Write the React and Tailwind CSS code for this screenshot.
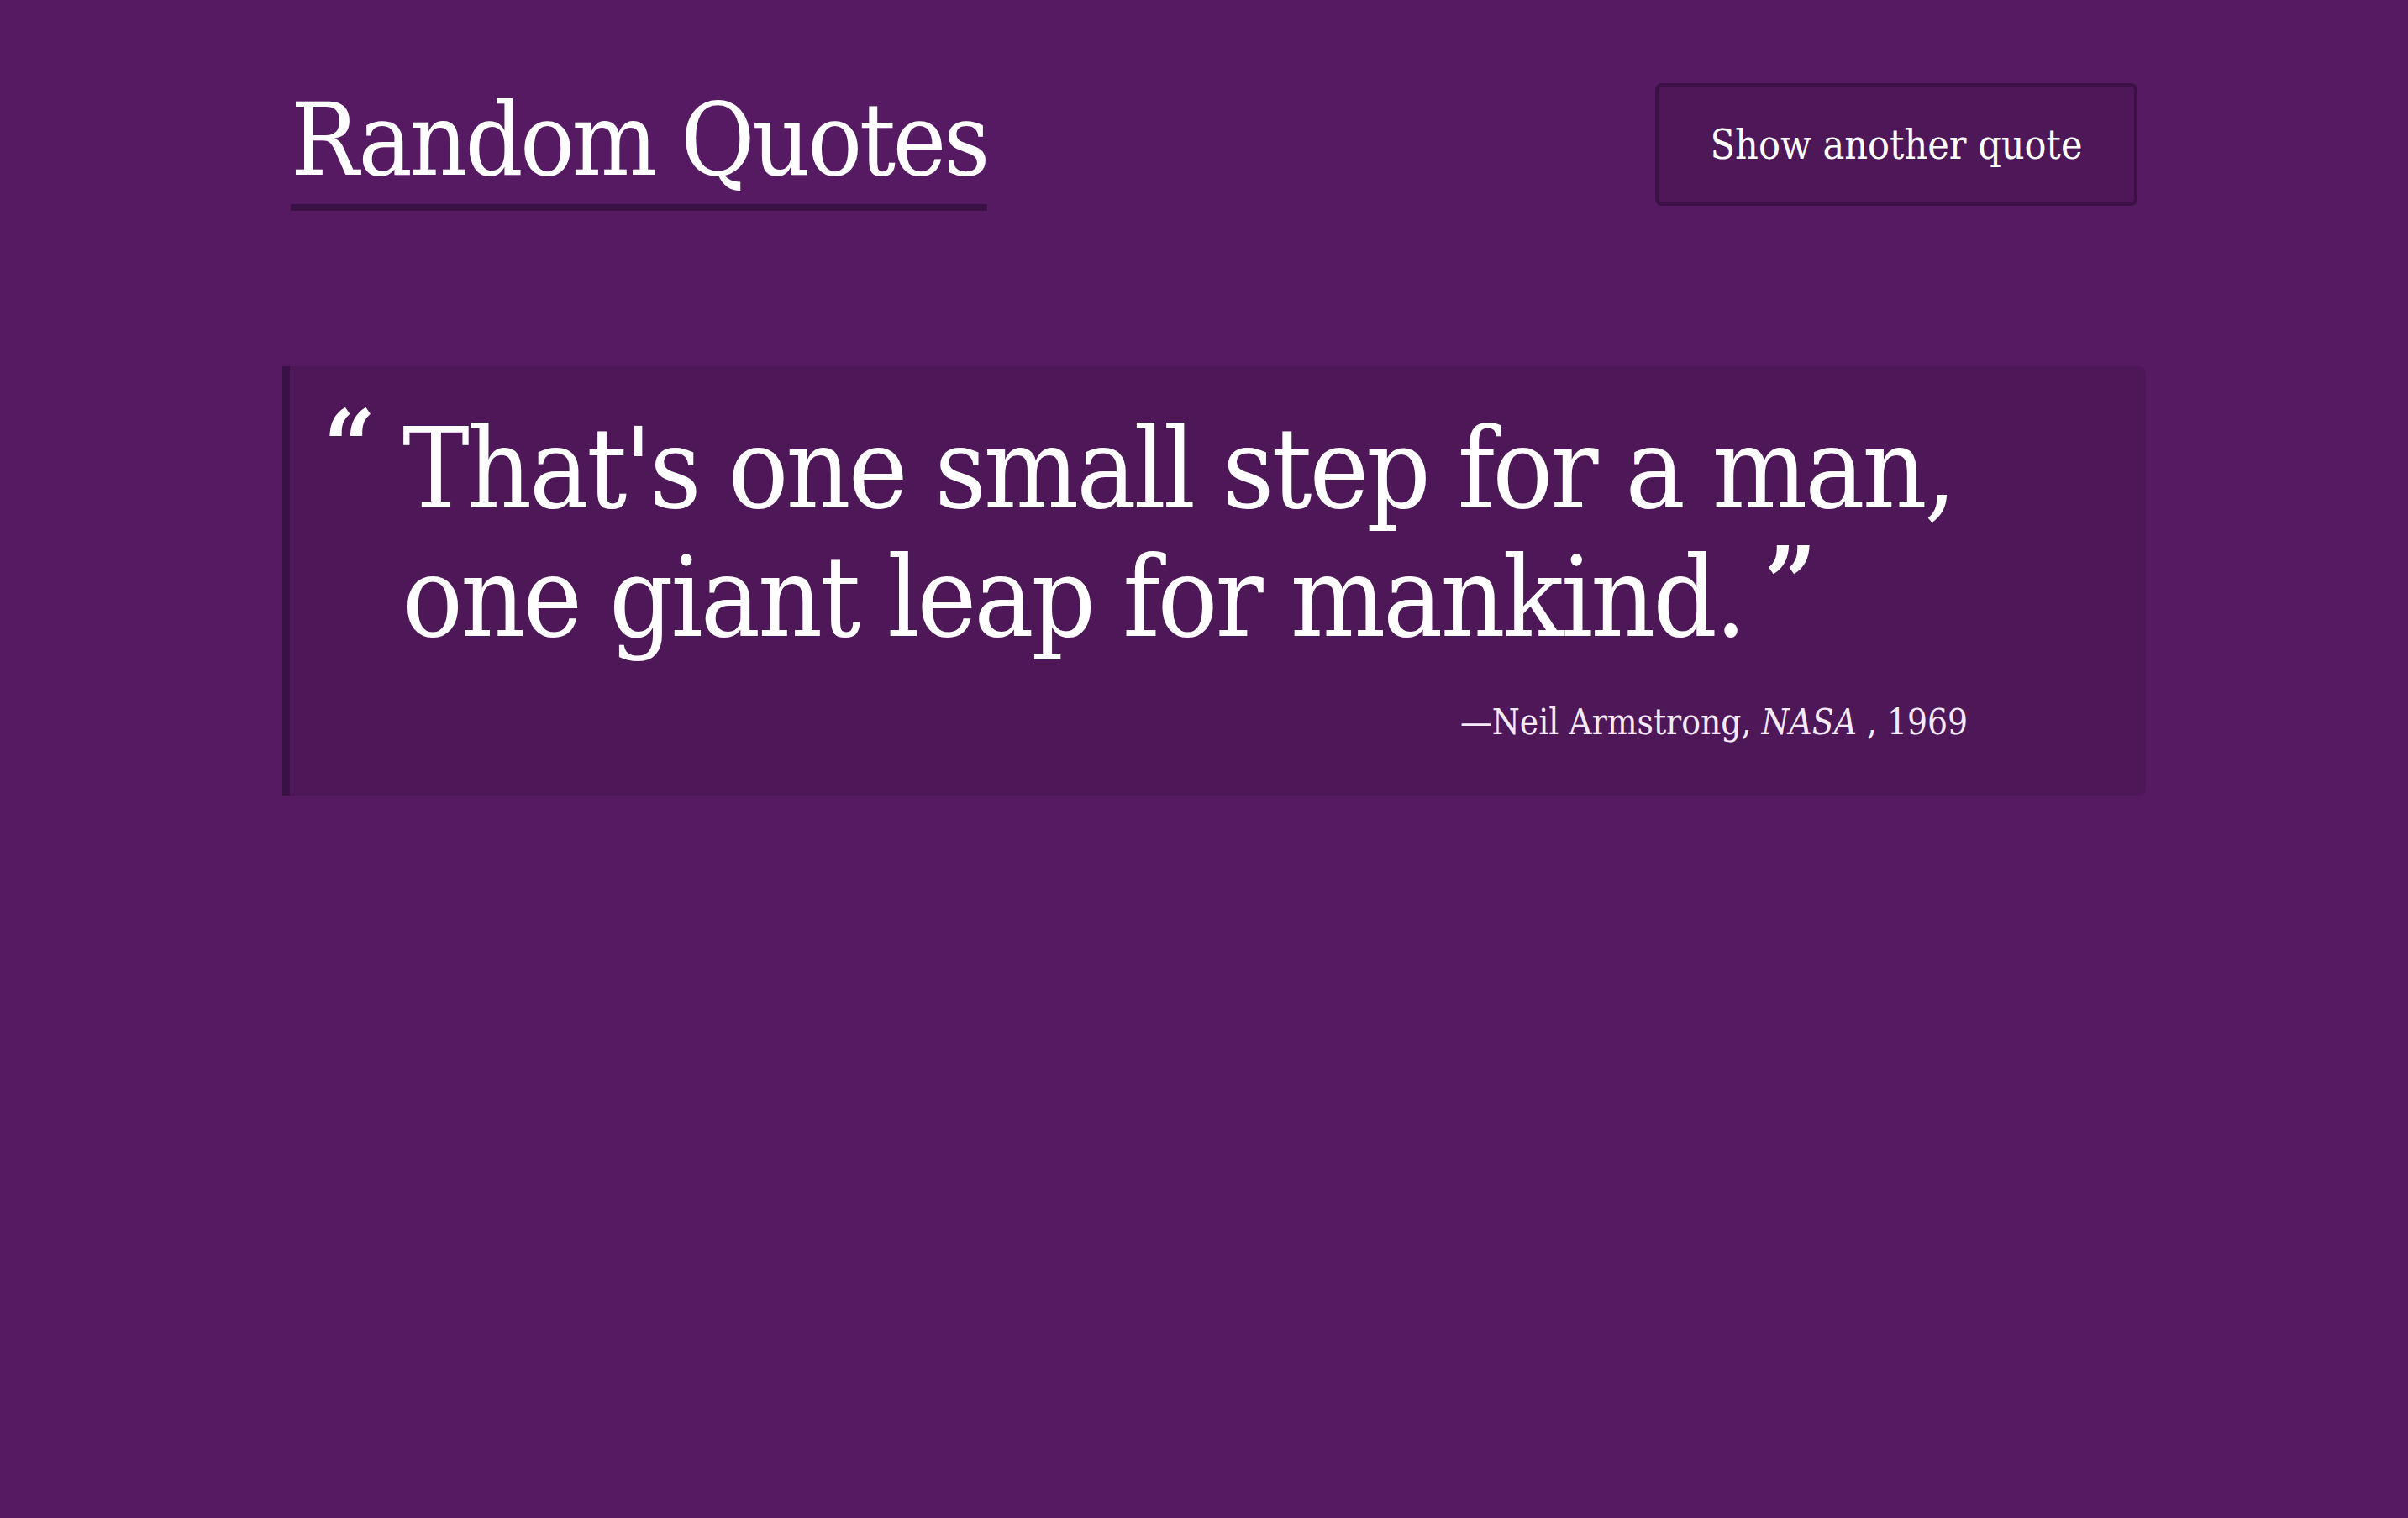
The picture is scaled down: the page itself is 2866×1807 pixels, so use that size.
import React from "react";

const quote = {
  text: ["That's one small step for a man,", "one giant leap for mankind."],
  author: "Neil Armstrong",
  source: "NASA",
  year: "1969",
};

const serif = "font-['DejaVu_Serif_Condensed','DejaVu_Serif',serif]";

export default function App() {
  return (
    <div className={`min-h-screen bg-[#561a63] text-white ${serif}`}>
      <div className="ml-[336px] w-[2218px]">
        <header className="flex items-start justify-between px-[10px] pt-[99px]">
          <h1 className="mt-[2px] border-b-[8px] border-[#3a1145] pb-[10px] text-[120px] leading-[1.1] font-normal tracking-[-3.5px]">
            Random Quotes
          </h1>
          <button className="h-[146px] w-[574px] rounded-lg border-4 border-[#3b1146] bg-[#4e1858] text-[48px] font-light">
            Show another quote
          </button>
        </header>

        <blockquote className="mt-[185px] flex h-[511px] rounded-r-lg border-l-[9px] border-[#3a1145] bg-[#4e1858] pt-[46px] pl-[40px]">
          <span className="mr-[32px] mt-[-10px] text-[120px] leading-none font-bold">&ldquo;</span>
          <div className="flex w-[1863px] flex-col">
            <p className="text-[133px] leading-[153px] font-light tracking-[-3px]">
              {quote.text[0]}
              <br />
              {quote.text[1]}
              <span className="ml-[24px] inline-block align-top text-[120px] leading-none font-bold tracking-normal">
                &rdquo;
              </span>
            </p>
            <p className="mt-[40px] text-right text-[42px] text-[#f6e9f8]">
              &mdash;{quote.author}, <cite className="italic">{quote.source}</cite> , {quote.year}
            </p>
          </div>
        </blockquote>
      </div>
    </div>
  );
}
